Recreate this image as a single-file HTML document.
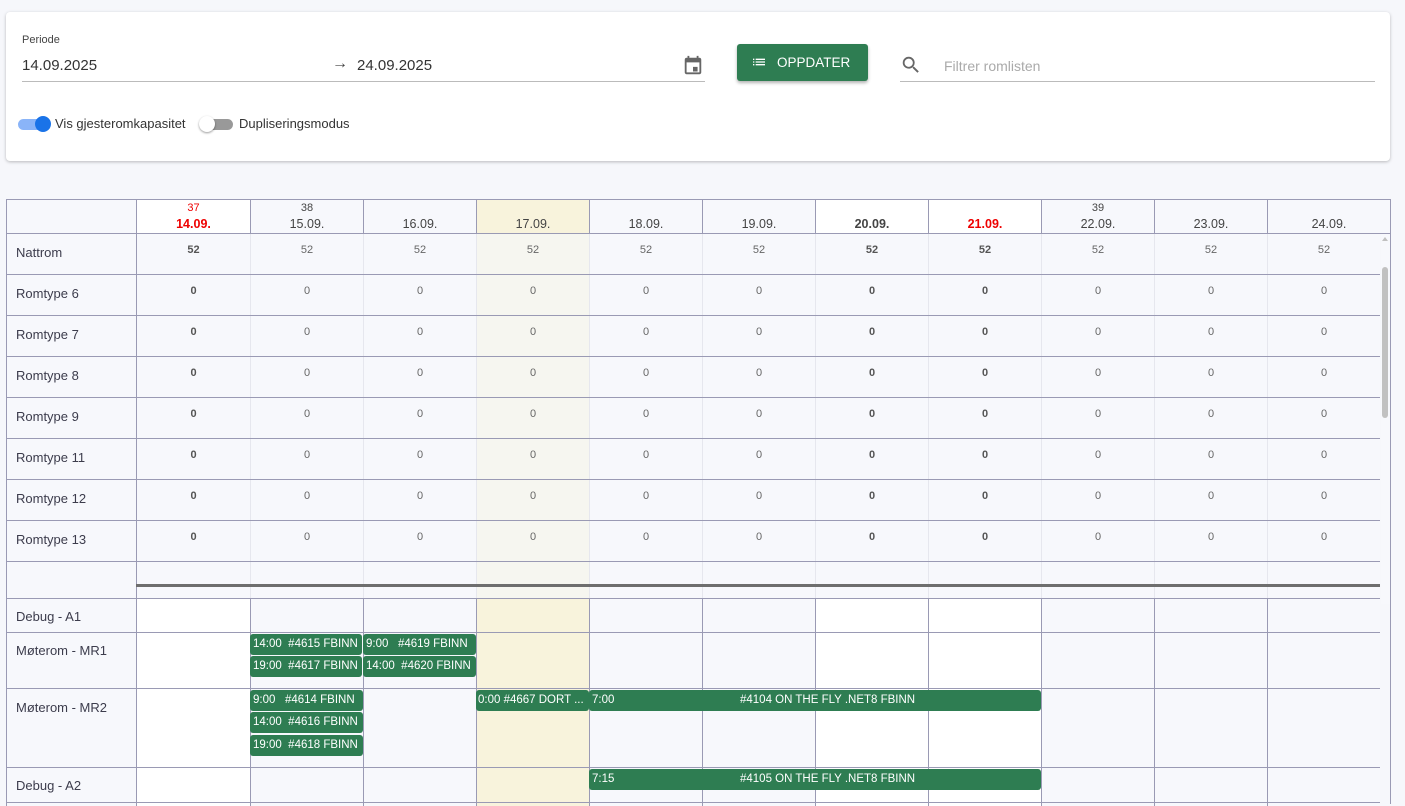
<!DOCTYPE html>
<html><head><meta charset="utf-8"><style>
*{box-sizing:border-box;margin:0;padding:0}
body{width:1405px;height:804px;overflow:hidden;background:#f6f7fb;font-family:"Liberation Sans",sans-serif;color:#3c3c4c;position:relative}
.card{position:absolute;left:6px;top:12px;width:1384px;height:149px;background:#fff;border-radius:4px;box-shadow:0 1px 3px rgba(0,0,0,.25)}
.abs{position:absolute}
.grid{position:absolute;left:6px;width:1374px;display:grid;grid-template-columns:129px 114px 113px 113px 113px 113px 113px 113px 113px 113px 113px 113px}
.hdr{top:199px;height:35px;border:1px solid #9a9ab4;border-right:none;background:#f7f8fc;width:1384px;grid-template-columns:129px 114px 113px 113px 113px 113px 113px 113px 113px 113px 113px 123px}
.hdr div{border-left:1px solid #9a9ab4;text-align:center;font-size:12.5px;color:#444;position:relative}
.hdr div:first-child{border-left:none}
.hdr .w{position:absolute;top:2px;left:0;right:0;font-size:11px}
.hdr .d{position:absolute;top:17px;left:0;right:0}
.sum{height:41px;border-bottom:1px solid #9a9ab4;border-left:1px solid #9a9ab4;background:#f7f8fc}
.sum div{border-left:1px solid #e6e7ee;text-align:center;font-size:11px;color:#666;padding-top:10px}
.sum div:first-child{border-left:none;text-align:left;padding-left:9px;padding-top:11px;font-size:13px;color:#3c3c4c}
.sum div:nth-child(2){border-left:1px solid #9a9ab4}
.sum .b{font-weight:bold;color:#555}
.sum .y{background:#f6f6f0}
.low{border-top:1px solid #9a9ab4;border-left:1px solid #9a9ab4;background:#f7f8fc}
.low div{border-left:1px solid #9a9ab4}
.low div:first-child{border-left:none;font-size:13px;padding-left:9px;color:#3c3c4c}
.low .wh{background:#fff}.low .y{background:#f8f3dc}
.ev{position:absolute;background:#2e7d52;color:#fff;font-size:11.5px;height:21px;line-height:21px;border-radius:3px;padding-left:3px;white-space:nowrap;overflow:hidden}
</style></head><body>
<div class="card">
 <div class="abs" style="left:16px;top:22px;font-size:11px;color:#444">Periode</div>
 <div class="abs" style="left:16px;top:45px;font-size:15px;color:#333">14.09.2025</div>
 <div class="abs" style="left:326px;top:43px;font-size:16px;color:#444">→</div>
 <div class="abs" style="left:351px;top:45px;font-size:15px;color:#333">24.09.2025</div>
 <svg class="abs" style="left:676px;top:43px" width="22" height="22" viewBox="0 0 24 24"><path fill="#666" d="M19 3h-1V1h-2v2H8V1H6v2H5c-1.1 0-2 .9-2 2v14c0 1.1.9 2 2 2h14c1.1 0 2-.9 2-2V5c0-1.1-.9-2-2-2zm0 16H5V8h14v11zM12 13h5v5h-5z"/></svg>
 <div class="abs" style="left:16px;top:69px;width:683px;height:1px;background:#bbb"></div>
 <div class="abs" style="left:731px;top:32px;width:131px;height:37px;background:#2e7d52;border-radius:3px;box-shadow:0 2px 3px rgba(0,0,0,.3);color:#fff;font-size:13.5px;line-height:37px;padding-left:40px">OPPDATER</div>
 <svg class="abs" style="left:745px;top:42px" width="16" height="16" viewBox="0 0 24 24"><path fill="#fff" d="M3 13h2v-2H3v2zm0 4h2v-2H3v2zm0-8h2V7H3v2zm4 4h14v-2H7v2zm0 4h14v-2H7v2zM7 7v2h14V7H7z"/></svg>
 <svg class="abs" style="left:894px;top:42px" width="22" height="22" viewBox="0 0 24 24"><path fill="#666" d="M15.5 14h-.79l-.28-.27A6.470 6.470 0 0 0 16 9.5 6.5 6.5 0 1 0 9.5 16c1.61 0 3.09-.59 4.23-1.57l.27.28v.79l5 4.99L20.49 19l-4.990-5zm-6 0C7.01 14 5 11.99 5 9.5S7.01 5 9.5 5 14 7.01 14 9.5 11.99 14 9.5 14z"/></svg>
 <div class="abs" style="left:938px;top:46px;font-size:14px;color:#aaa">Filtrer romlisten</div>
 <div class="abs" style="left:894px;top:69px;width:475px;height:1px;background:#bbb"></div>
 <div class="abs" style="left:12px;top:107px;width:30px;height:11px;border-radius:6px;background:#8ab4f8"></div>
 <div class="abs" style="left:29px;top:104px;width:16px;height:16px;border-radius:8px;background:#1a73e8"></div>
 <div class="abs" style="left:49px;top:104px;font-size:13px;color:#333">Vis gjesteromkapasitet</div>
 <div class="abs" style="left:197px;top:107px;width:30px;height:11px;border-radius:6px;background:#999"></div>
 <div class="abs" style="left:193px;top:104px;width:16px;height:16px;border-radius:8px;background:#fff;box-shadow:0 1px 2px rgba(0,0,0,.4)"></div>
 <div class="abs" style="left:233px;top:104px;font-size:13px;color:#333">Dupliseringsmodus</div>
</div>

<div class="grid hdr">
 <div></div>
 <div style="background:#fff"><span class="w" style="color:#e00">37</span><span class="d" style="color:#e00;font-weight:bold">14.09.</span></div>
 <div><span class="w">38</span><span class="d">15.09.</span></div>
 <div><span class="d">16.09.</span></div>
 <div style="background:#f8f3dc"><span class="d">17.09.</span></div>
 <div><span class="d">18.09.</span></div>
 <div><span class="d">19.09.</span></div>
 <div style="background:#fff"><span class="d" style="font-weight:bold">20.09.</span></div>
 <div style="background:#fff"><span class="d" style="color:#e00;font-weight:bold">21.09.</span></div>
 <div><span class="w">39</span><span class="d">22.09.</span></div>
 <div><span class="d">23.09.</span></div>
 <div><span class="d">24.09.</span></div>
</div>
<div class="abs" style="left:6px;top:233px;width:1384px;height:1px;background:#9a9ab4"></div>

<div class="grid sum" style="top:234px"><div>Nattrom</div><div class="b">52</div><div>52</div><div>52</div><div class="y">52</div><div>52</div><div>52</div><div class="b">52</div><div class="b">52</div><div>52</div><div>52</div><div>52</div></div>
<div class="grid sum" style="top:275px"><div>Romtype 6</div><div class="b">0</div><div>0</div><div>0</div><div class="y">0</div><div>0</div><div>0</div><div class="b">0</div><div class="b">0</div><div>0</div><div>0</div><div>0</div></div>
<div class="grid sum" style="top:316px"><div>Romtype 7</div><div class="b">0</div><div>0</div><div>0</div><div class="y">0</div><div>0</div><div>0</div><div class="b">0</div><div class="b">0</div><div>0</div><div>0</div><div>0</div></div>
<div class="grid sum" style="top:357px"><div>Romtype 8</div><div class="b">0</div><div>0</div><div>0</div><div class="y">0</div><div>0</div><div>0</div><div class="b">0</div><div class="b">0</div><div>0</div><div>0</div><div>0</div></div>
<div class="grid sum" style="top:398px"><div>Romtype 9</div><div class="b">0</div><div>0</div><div>0</div><div class="y">0</div><div>0</div><div>0</div><div class="b">0</div><div class="b">0</div><div>0</div><div>0</div><div>0</div></div>
<div class="grid sum" style="top:439px"><div>Romtype 11</div><div class="b">0</div><div>0</div><div>0</div><div class="y">0</div><div>0</div><div>0</div><div class="b">0</div><div class="b">0</div><div>0</div><div>0</div><div>0</div></div>
<div class="grid sum" style="top:480px"><div>Romtype 12</div><div class="b">0</div><div>0</div><div>0</div><div class="y">0</div><div>0</div><div>0</div><div class="b">0</div><div class="b">0</div><div>0</div><div>0</div><div>0</div></div>
<div class="grid sum" style="top:521px"><div>Romtype 13</div><div class="b">0</div><div>0</div><div>0</div><div class="y">0</div><div>0</div><div>0</div><div class="b">0</div><div class="b">0</div><div>0</div><div>0</div><div>0</div></div>
<div class="grid sum" style="top:562px;height:37px"><div></div><div></div><div></div><div></div><div class="y"></div><div></div><div></div><div></div><div></div><div></div><div></div><div></div></div>
<div class="abs" style="left:136px;top:584px;width:1244px;height:3px;background:#6e6e6e"></div>

<div class="grid low" style="top:598px;height:35px"><div style="padding-top:10px">Debug - A1</div><div class="wh"></div><div></div><div></div><div class="y"></div><div></div><div></div><div class="wh"></div><div class="wh"></div><div></div><div></div><div></div></div>
<div class="grid low" style="top:632px;height:57px"><div style="padding-top:10px">Møterom - MR1</div><div class="wh"></div><div></div><div></div><div class="y"></div><div></div><div></div><div class="wh"></div><div class="wh"></div><div></div><div></div><div></div></div>
<div class="grid low" style="top:688px;height:80px"><div style="padding-top:11px">Møterom - MR2</div><div class="wh"></div><div></div><div></div><div class="y"></div><div></div><div></div><div class="wh"></div><div class="wh"></div><div></div><div></div><div></div></div>
<div class="grid low" style="top:767px;height:35px"><div style="padding-top:10px">Debug - A2</div><div class="wh"></div><div></div><div></div><div class="y"></div><div></div><div></div><div class="wh"></div><div class="wh"></div><div></div><div></div><div></div></div>
<div class="grid low" style="top:802px;height:4px"><div></div><div class="wh"></div><div></div><div></div><div class="y"></div><div></div><div></div><div class="wh"></div><div class="wh"></div><div></div><div></div><div></div></div>

<div class="abs" style="left:1390px;top:199px;width:1px;height:605px;background:#9a9ab4"></div>
<div class="abs" style="left:1381px;top:234px;width:9px;height:370px;background:#f7f8fc"></div>
<div class="abs" style="left:1382px;top:237px;width:0;height:0;border-left:3px solid transparent;border-right:3px solid transparent;border-bottom:4px solid #c0c0c0"></div>
<div class="abs" style="left:1382px;top:267px;width:6px;height:151px;border-radius:3px;background:#c1c1c1"></div>

<div class="ev" style="left:250px;top:634px;width:112px">14:00 &nbsp;#4615 FBINN</div>
<div class="ev" style="left:363px;top:634px;width:113px">9:00 &nbsp;&nbsp;#4619 FBINN</div>
<div class="ev" style="left:250px;top:656px;width:112px">19:00 &nbsp;#4617 FBINN</div>
<div class="ev" style="left:363px;top:656px;width:113px">14:00 &nbsp;#4620 FBINN</div>
<div class="ev" style="left:250px;top:690px;width:113px">9:00 &nbsp;&nbsp;#4614 FBINN</div>
<div class="ev" style="left:250px;top:712px;width:113px">14:00 &nbsp;#4616 FBINN</div>
<div class="ev" style="left:250px;top:735px;width:113px">19:00 &nbsp;#4618 FBINN</div>
<div class="ev" style="left:476px;top:690px;width:113px;padding-left:2px">0:00 #4667 DORT ...</div>
<div class="ev" style="left:589px;top:690px;width:452px">7:00<span style="position:absolute;left:151px">#4104 ON THE FLY .NET8 FBINN</span></div>
<div class="ev" style="left:589px;top:769px;width:452px">7:15<span style="position:absolute;left:151px">#4105 ON THE FLY .NET8 FBINN</span></div>
</body></html>
